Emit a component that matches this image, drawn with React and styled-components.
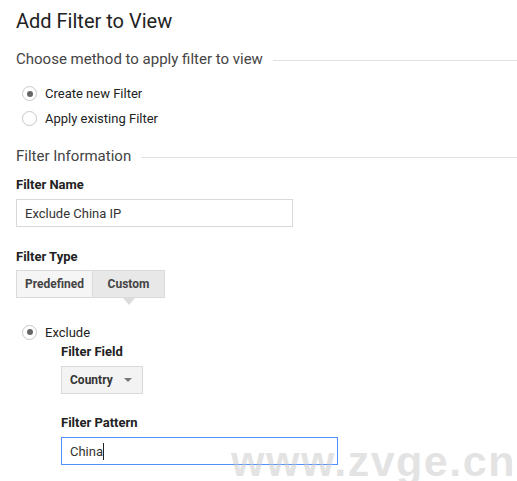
import React from "react";
import styled, { createGlobalStyle } from "styled-components";

const GlobalStyle = createGlobalStyle`
  body {
    margin: 0;
    background: #fff;
    font-family: Roboto, "Liberation Sans", Arial, sans-serif;
    color: #222;
  }
`;

const Page = styled.div`
  position: relative;
  width: 517px;
  height: 481px;
  overflow: hidden;
  padding: 0 0 0 16px;
  box-sizing: border-box;
`;

const Title = styled.h1`
  margin: 9px 0 0;
  font-size: 20px;
  line-height: 24px;
  font-weight: 400;
  color: #222;
`;

const SectionHeader = styled.div`
  display: flex;
  align-items: center;
  gap: 10px;
  margin-top: ${(p) => p.$top}px;
  font-size: 15px;
  line-height: 20px;
  color: #444;

  &::after {
    content: "";
    flex: 1;
    height: 1px;
    margin-top: 3px;
    background: #e0e0e0;
  }
`;

const RadioList = styled.div`
  display: flex;
  flex-direction: column;
  margin-top: ${(p) => p.$top}px;
`;

const RadioRow = styled.label`
  display: flex;
  align-items: center;
  height: ${(p) => p.$height || 25}px;
  font-size: 13px;
  color: #222;
`;

const RadioCircle = styled.span`
  box-sizing: border-box;
  width: 15px;
  height: 15px;
  margin: 0 8px 0 6px;
  border-radius: 50%;
  border: 1px solid #c8c8c8;
  background: #fff;
  display: flex;
  align-items: center;
  justify-content: center;

  &::after {
    content: "";
    display: ${(p) => (p.$checked ? "block" : "none")};
    width: 6px;
    height: 6px;
    border-radius: 50%;
    background: #666;
  }
`;

const FieldLabel = styled.div`
  margin-top: ${(p) => p.$top}px;
  font-size: 13px;
  line-height: 16px;
  font-weight: 700;
  color: #222;
`;

const TextBox = styled.div`
  box-sizing: border-box;
  width: 277px;
  height: 28px;
  margin-top: 6px;
  padding: 0 8px;
  display: flex;
  align-items: center;
  border: 1px solid ${(p) => (p.$focused ? "#4d90fe" : "#d9d9d9")};
  background: #fff;
  font-size: 13px;
  color: #333;
`;

const Caret = styled.span`
  display: inline-block;
  width: 1px;
  height: 17px;
  background: #222;
`;

const ButtonGroup = styled.div`
  display: inline-flex;
  margin-top: 5px;
`;

const ToggleButton = styled.div`
  position: relative;
  box-sizing: border-box;
  height: 28px;
  width: ${(p) => p.$width}px;
  display: flex;
  align-items: center;
  justify-content: center;
  font-size: 12px;
  font-weight: 700;
  color: #444;
  background: ${(p) => (p.$active ? "#e8e8e8" : "#f5f5f5")};
  border: 1px solid #dadada;
  margin-left: ${(p) => (p.$first ? 0 : -1)}px;

  ${(p) =>
    p.$active &&
    `
    &::after {
      content: "";
      position: absolute;
      left: 50%;
      top: 27px;
      margin-left: -6px;
      border-left: 6px solid transparent;
      border-right: 6px solid transparent;
      border-top: 7px solid #dcdcdc;
    }
  `}
`;

const Nested = styled.div`
  padding-left: 45px;
`;

const Dropdown = styled.div`
  box-sizing: border-box;
  margin-top: 6px;
  width: 82px;
  height: 28px;
  padding: 0 8px;
  display: flex;
  align-items: center;
  justify-content: space-between;
  background: #f3f3f3;
  border: 1px solid #dadada;
  font-size: 12px;
  font-weight: 700;
  color: #333;

  &::after {
    content: "";
    border-left: 4px solid transparent;
    border-right: 4px solid transparent;
    border-top: 4px solid #777;
    margin-right: 2px;
  }
`;

const Watermark = styled.div`
  position: absolute;
  left: 231px;
  top: 441px;
  font-family: "Liberation Sans", Arial, sans-serif;
  font-weight: 700;
  font-size: 43px;
  line-height: 40px;
  letter-spacing: 1.5px;
  color: rgba(200, 200, 200, 0.5);
  white-space: nowrap;
  pointer-events: none;
`;

export default function App() {
  return (
    <>
      <GlobalStyle />
      <Page>
        <Title>Add Filter to View</Title>

        <SectionHeader $top={16}>Choose method to apply filter to view</SectionHeader>
        <RadioList $top={12}>
          <RadioRow>
            <RadioCircle $checked />
            Create new Filter
          </RadioRow>
          <RadioRow>
            <RadioCircle />
            Apply existing Filter
          </RadioRow>
        </RadioList>

        <SectionHeader $top={15}>Filter Information</SectionHeader>
        <FieldLabel $top={11}>Filter Name</FieldLabel>
        <TextBox>Exclude China IP</TextBox>

        <FieldLabel $top={22}>Filter Type</FieldLabel>
        <ButtonGroup>
          <ToggleButton $first $width={77}>Predefined</ToggleButton>
          <ToggleButton $active $width={73}>Custom</ToggleButton>
        </ButtonGroup>

        <RadioList $top={26}>
          <RadioRow $height={16}>
            <RadioCircle $checked />
            Exclude
          </RadioRow>
        </RadioList>
        <Nested>
          <FieldLabel $top={4}>Filter Field</FieldLabel>
          <Dropdown>Country</Dropdown>
          <FieldLabel $top={21}>Filter Pattern</FieldLabel>
          <TextBox $focused>
            China
            <Caret />
          </TextBox>
        </Nested>

        <Watermark>www.zvge.cn</Watermark>
      </Page>
    </>
  );
}
